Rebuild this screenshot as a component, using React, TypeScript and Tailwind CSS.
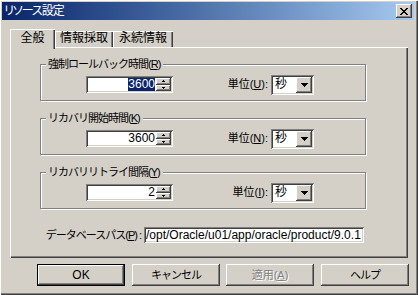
import React from "react";

const font =
  "font-['Liberation_Sans','Noto_Sans_CJK_JP',sans-serif] text-[11px] leading-[13px] text-black";

const raised =
  "shadow-[inset_-1px_-1px_#404040,inset_1px_1px_#ffffff,inset_-2px_-2px_#808080,inset_2px_2px_#d4d0c8]";
const sunken =
  "shadow-[inset_1px_1px_#808080,inset_-1px_-1px_#ffffff,inset_2px_2px_#404040,inset_-2px_-2px_#d4d0c8]";

function U({ children }: { children: React.ReactNode }) {
  return <span className="underline underline-offset-[1px]">{children}</span>;
}

function Spin({ value, selected }: { value: string; selected?: boolean }) {
  return (
    <div className={`w-[87px] h-[17px] bg-white ${sunken} p-[2px] flex`}>
      <div className="flex-1 flex items-center justify-end pr-[1px] font-['Liberation_Sans',sans-serif] text-[12px]">
        <span className={selected ? "bg-[#0a246a] text-white leading-[13px]" : "leading-[13px]"}>{value}</span>
      </div>
      <div className="w-[15px] flex flex-col">
        <div className={`flex-1 bg-[#d4d0c8] ${raised} flex items-center justify-center`}>
          <svg width="3" height="2" viewBox="0 0 3 2"><path d="M1 0h1v1h1v1H0V1h1z" fill="#000" /></svg>
        </div>
        <div className={`flex-1 bg-[#d4d0c8] ${raised} flex items-center justify-center`}>
          <svg width="3" height="2" viewBox="0 0 3 2"><path d="M0 0h3v1H2v1H1V1H0z" fill="#000" /></svg>
        </div>
      </div>
    </div>
  );
}

function Combo() {
  return (
    <div className={`w-[43px] h-[20px] bg-white ${sunken} p-[2px] flex`}>
      <div className="flex-1 flex items-center pl-[2px] text-[12px]">秒</div>
      <div className={`w-[16px] bg-[#d4d0c8] ${raised} flex items-center justify-center`}>
        <svg width="7" height="4" viewBox="0 0 7 4">
          <path d="M0 0h7v1H6v1H5v1H4v1H3V3H2V2H1V1H0z" fill="#000" />
        </svg>
      </div>
    </div>
  );
}

function Group({
  label,
  unit,
  value,
  selected,
}: {
  label: React.ReactNode;
  unit: React.ReactNode;
  value: string;
  selected?: boolean;
}) {
  return (
    <div className="relative w-[326px] h-[37px] border border-[#808080] shadow-[inset_1px_1px_#ffffff,1px_1px_#ffffff]">
      <div className="absolute left-[5px] top-[-7px] bg-[#d4d0c8] pl-[2px] pr-[3px] whitespace-nowrap tracking-[-1px]">
        {label}
      </div>
      <div className="flex items-center h-full pt-[4px] pl-[45px]">
        <Spin value={value} selected={selected} />
        <div className="w-[95px] text-right whitespace-nowrap">{unit}</div>
        <div className="ml-[3px]">
          <Combo />
        </div>
      </div>
    </div>
  );
}

function Btn({
  children,
  def,
  disabled,
  className = "",
}: {
  children: React.ReactNode;
  def?: boolean;
  disabled?: boolean;
  className?: string;
}) {
  return (
    <div className={`w-[88px] h-[22px] ${def ? "border border-black" : ""} ${className}`}>
      <div
        className={`w-full h-full bg-[#d4d0c8] ${raised} flex items-center justify-center ${
          disabled ? "text-[#808080] [text-shadow:1px_1px_0_#ffffff]" : ""
        }`}
      >
        {children}
      </div>
    </div>
  );
}

const tabShadow = "shadow-[inset_1px_1px_#ffffff,inset_-1px_0_#404040,inset_-2px_0_#808080]";

export default function App() {
  return (
    <div
      className={`${font} w-[418px] h-[295px] bg-[#d4d0c8] flex flex-col pt-[2px] pl-[2px] pr-[4px] pb-[4px] shadow-[inset_1px_1px_#ffffff,inset_-1px_-1px_#404040,inset_-2px_-2px_#808080]`}
    >
      {/* title bar */}
      <div className="h-[18px] bg-gradient-to-r from-[#0a246a] to-[#a6caf0] flex items-center justify-between pl-[2px] pr-[2px]">
        <span className="text-white text-[12px] leading-[14px] tracking-[-1px] [font-feature-settings:'palt']">
          リソース設定
        </span>
        <div className={`w-[16px] h-[14px] bg-[#d4d0c8] ${raised} flex items-center justify-center`}>
          <svg width="8" height="7" viewBox="0 0 8 7">
            <path
              d="M0 0h2v1h1v1h2V1h1V0h2v1H7v1H6v1H5v1h1v1h1v1h1v1H6V6H5V5H3v1H2v1H0V6h1V5h1V4h1V3H2V2H1V1H0z"
              fill="#000"
            />
          </svg>
        </div>
      </div>

      <div className="flex-1 flex flex-col pl-[8px] pt-[9px]">
        {/* tabs */}
        <div className="h-[18px] flex items-end relative z-10 text-[12px]">
          <div className={`w-[45px] h-[20px] mb-[-2px] bg-[#d4d0c8] ${tabShadow} flex items-start justify-center pt-[3px]`}>
            全般
          </div>
          <div className={`w-[58px] h-[16px] ${tabShadow} flex items-start justify-center pt-[1px]`}>
            情報採取
          </div>
          <div className={`w-[60px] h-[16px] ${tabShadow} flex items-start justify-center pt-[1px]`}>
            永続情報
          </div>
        </div>

        {/* panel */}
        <div className="w-[398px] h-[211px] shadow-[inset_1px_1px_#ffffff,inset_-1px_-1px_#404040,inset_-2px_-2px_#808080] pl-[30px] pt-[17px] flex flex-col">
          <div className="flex flex-col gap-[17px]">
            <Group
              label={<>強制ロールバック時間(<U>R</U>)</>}
              unit={<>単位(<U>U</U>):</>}
              value="3600"
              selected
            />
            <Group
              label={<>リカバリ開始時間(<U>K</U>)</>}
              unit={<>単位(<U>N</U>):</>}
              value="3600"
            />
            <Group
              label={<>リカバリリトライ間隔(<U>Y</U>)</>}
              unit={<>単位(<U>I</U>):</>}
              value="2"
            />
          </div>
          <div className="w-[324px] flex items-center justify-end mt-[18px]">
            <div className="whitespace-nowrap tracking-[-1px]">
              データベースパス(<U>P</U>) :
            </div>
            <div
              className={`ml-[3px] w-[220px] shrink-0 h-[16px] bg-white ${sunken} flex items-center pl-[2px] overflow-hidden whitespace-nowrap text-[12px]`}
            >
              /opt/Oracle/u01/app/oracle/product/9.0.1
            </div>
          </div>
        </div>

        {/* buttons */}
        <div className="flex mt-[6px] pl-[27px]">
          <Btn def>
            <span className="text-[12px]">OK</span>
          </Btn>
          <Btn className="ml-[7px]">
            <span className="tracking-[-1px]">キャンセル</span>
          </Btn>
          <Btn className="ml-[6px]" disabled>
            適用(<U>A</U>)
          </Btn>
          <Btn className="ml-[7px]">
            <span className="tracking-[-1px]">ヘルプ</span>
          </Btn>
        </div>
      </div>
    </div>
  );
}
